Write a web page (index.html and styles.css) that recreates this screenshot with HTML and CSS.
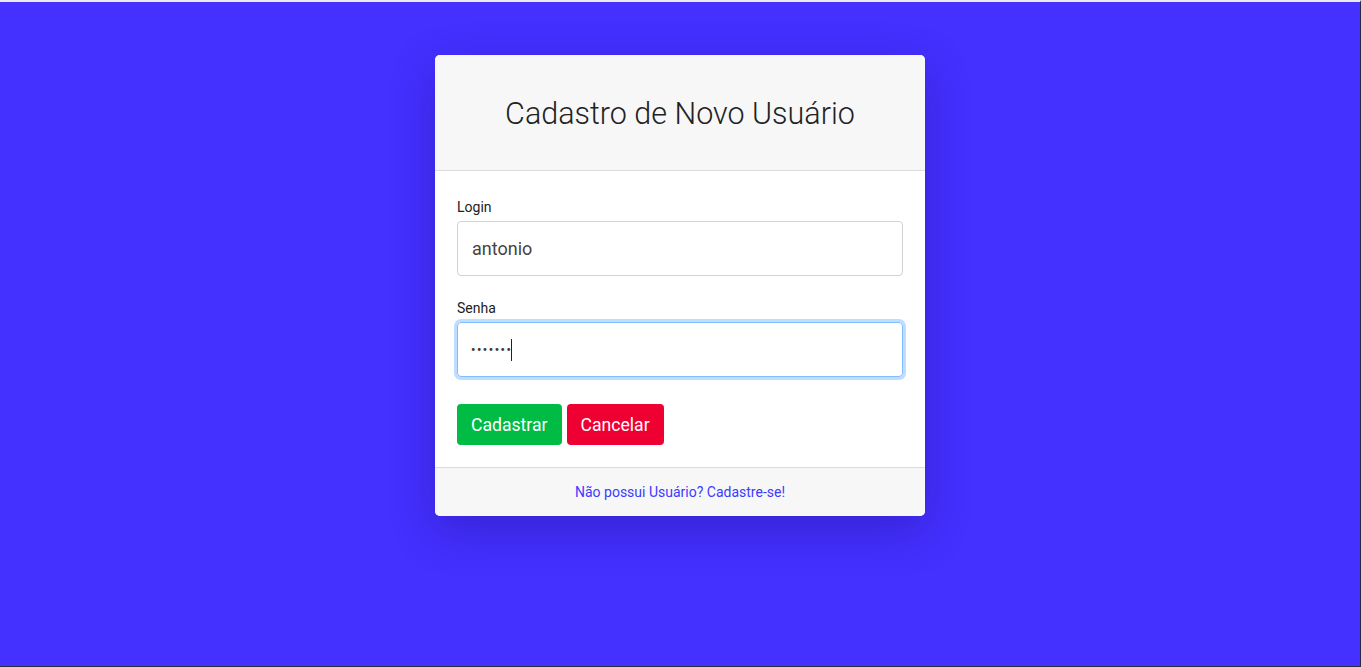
FILE: index.html
```html
<!DOCTYPE html>
<html lang="pt-BR">
<head>
<meta charset="utf-8">
<title>Cadastro de Novo Usuário</title>
<link rel="stylesheet" href="styles.css">
</head>
<body>
<main class="page">
  <section class="card">
    <header class="card-header">
      <h1 class="card-title">Cadastro de Novo Usuário</h1>
    </header>
    <form class="card-body">
      <div class="field">
        <label class="field-label">Login</label>
        <div class="field-input">antonio</div>
      </div>
      <div class="field">
        <label class="field-label">Senha</label>
        <div class="field-input is-focused"><span class="dots">•••••••</span><span class="caret"></span></div>
      </div>
      <div class="actions">
        <button type="button" class="btn btn-success">Cadastrar</button>
        <button type="button" class="btn btn-danger">Cancelar</button>
      </div>
    </form>
    <footer class="card-footer">
      <a class="footer-link" href="#">Não possui Usuário? Cadastre-se!</a>
    </footer>
  </section>
</main>
</body>
</html>
```
FILE: styles.css
```css
* { box-sizing: border-box; }
html, body { height: 100%; }
body {
  margin: 0;
  font-family: Roboto, "Liberation Sans", Arial, sans-serif;
  background: #4430ff;
  border-top: 2px solid #ebebeb;
  border-right: 1px solid #2b2b3a;
  border-bottom: 1px solid #2b2b3a;
  overflow: hidden;
}
.page {
  display: flex;
  justify-content: center;
  padding-top: 53px;
}
.card {
  width: 490px;
  background: #fff;
  border-radius: 5px;
  overflow: hidden;
  box-shadow: 0 14px 45px rgba(20, 10, 110, 0.3);
}
.card-header {
  height: 116px;
  background: #f7f7f7;
  border-bottom: 1px solid #dcdcdc;
  display: flex;
  align-items: center;
  justify-content: center;
}
.card-title {
  margin: 0;
  padding-top: 2px;
  font-size: 30.5px;
  font-weight: 300;
  color: #222;
}
.card-body {
  padding: 26px 22px 22px;
  margin: 0;
}
.field { display: flex; flex-direction: column; }
.field + .field { margin-top: 22px; }
.field-label {
  font-size: 14px;
  line-height: 21px;
  color: #212121;
  margin-bottom: 3px;
}
.field-input {
  height: 55px;
  border: 1px solid #cfd3d7;
  border-radius: 4px;
  padding: 0 14px;
  display: flex;
  align-items: center;
  font-size: 18px;
  color: #444;
}
.field-input.is-focused {
  border-color: #80bdff;
  box-shadow: 0 0 0 3px rgba(0, 123, 255, 0.25);
}
.dots {
  font-size: 12px;
  letter-spacing: 1.6px;
  color: #3a3a3a;
  font-weight: 700;
  margin-left: -1px;
}
.caret {
  display: inline-block;
  width: 1px;
  height: 22px;
  background: #222;
  margin-left: -1px;
}
.actions {
  display: flex;
  gap: 5px;
  margin-top: 27px;
}
.btn {
  height: 41px;
  border: 0;
  border-radius: 4px;
  padding: 0 14px;
  font-family: inherit;
  font-size: 17.6px;
  color: #fff;
  cursor: pointer;
}
.btn-success { background: #00bb44; }
.btn-danger { background: #ee0033; }
.card-footer {
  height: 49px;
  background: #f7f7f7;
  border-top: 1px solid #dcdcdc;
  display: flex;
  align-items: center;
  justify-content: center;
}
.footer-link {
  font-size: 14px;
  color: #3b3bff;
  text-decoration: none;
}
```
